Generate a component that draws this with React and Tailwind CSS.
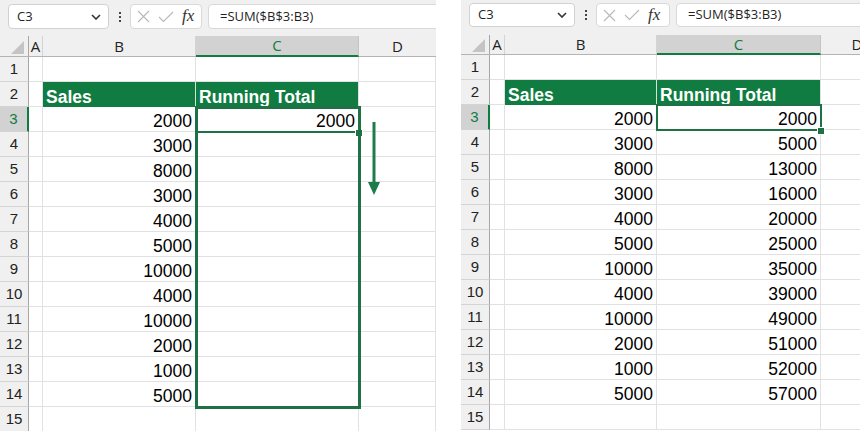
import React from 'react'

const SALES = [2000, 3000, 8000, 3000, 4000, 5000, 10000, 4000, 10000, 2000, 1000, 5000]
const TOTALS = [2000, 5000, 13000, 16000, 20000, 25000, 35000, 39000, 49000, 51000, 52000, 57000]

// per-panel sizes, written out as full class names
const LEFT = {
  w: 'w-[436px]',
  bar: 'h-[36px] pt-[4px]',
  box: 'h-[25px]',
  name: 'w-[101px]',
  fx: 'w-[72px]',
  head: 'h-[21px]',
  cols: ['w-[29px]', 'w-[14px]', 'w-[153px]', 'w-[163px]', 'w-[77px]'],
  active: 'left-[195px] w-[165px]',
  handle: 'left-[356px]',
  range: 'left-[195px] w-[166px]',
  arrow: 'left-[367px]',
}
const RIGHT = {
  w: 'w-[399px]',
  bar: 'h-[35px] pt-[3px]',
  box: 'h-[24px]',
  name: 'w-[106px]',
  fx: 'w-[74px]',
  head: 'h-[20px]',
  cols: ['w-[29px]', 'w-[15px]', 'w-[152px]', 'w-[164px]', 'w-[72px]'],
  active: 'left-[195px] w-[166px]',
  handle: 'left-[357px]',
}

function Toolbar({ cfg }) {
  return (
    <div className={'flex items-start bg-[#f0f0f0] pl-[8px] shrink-0 ' + cfg.bar}>
      <div className={'flex items-center justify-between bg-white border border-[#d1d1d1] rounded-[4px] pl-[8px] pr-[7px] shrink-0 ' + cfg.name + ' ' + cfg.box}>
        <span className="text-[13px] text-[#1f1f1f]">C3</span>
        <svg width="10" height="6" viewBox="0 0 10 6">
          <path d="M1 1 L5 5 L9 1" fill="none" stroke="#333" strokeWidth="1.6" />
        </svg>
      </div>
      <div className={'w-[21px] flex flex-col items-center justify-center gap-[2px] shrink-0 ' + cfg.box}>
        <span className="w-[2px] h-[2px] bg-[#444]" />
        <span className="w-[2px] h-[2px] bg-[#444]" />
        <span className="w-[2px] h-[2px] bg-[#444]" />
      </div>
      <div className={'flex items-center bg-white border border-[#d9d9d9] rounded-[4px] pl-[6px] gap-[8px] shrink-0 ' + cfg.fx + ' ' + cfg.box}>
        <svg width="13" height="13" viewBox="0 0 13 13">
          <path d="M1 1 L12 12 M12 1 L1 12" stroke="#b8b8b8" strokeWidth="1.1" />
        </svg>
        <svg width="16" height="12" viewBox="0 0 16 12">
          <path d="M1 6 L5.5 10.5 L15 1" fill="none" stroke="#b8b8b8" strokeWidth="1.1" />
        </svg>
        <span className="font-['Liberation_Serif',serif] italic text-[17px] leading-none text-[#333] -mt-[2px]">fx</span>
      </div>
      <div className={'flex items-center bg-white border border-[#d9d9d9] rounded-[4px] ml-[6px] pl-[11px] w-[420px] shrink-0 ' + cfg.box}>
        <span className="text-[13px] text-[#1f1f1f]">=SUM($B$3:B3)</span>
      </div>
    </div>
  )
}

function HeaderRow({ cfg }) {
  const [r, a, b, c, d] = cfg.cols
  return (
    <div className={'flex bg-[#f0f0f0] border-b border-[#b4b4b4] text-[15px] text-[#222] shrink-0 ' + cfg.head}>
      <div className={'relative border-r border-[#a6a6a6] shrink-0 ' + r}>
        <svg className="absolute right-[4px] bottom-[2px]" width="13" height="13" viewBox="0 0 13 13">
          <polygon points="13,0 13,13 0,13" fill="#c4c4c4" />
        </svg>
      </div>
      <div className={'flex items-center justify-center border-r border-[#d4d4d4] shrink-0 ' + a}>A</div>
      <div className={'flex items-center justify-center border-r border-[#d4d4d4] shrink-0 ' + b}>B</div>
      <div className={'flex items-center justify-center bg-[#d2d2d2] border-r border-[#c4c4c4] border-b-2 border-b-[#107c41] -mb-px text-[#107c41] shrink-0 ' + c}>
        C
      </div>
      <div className={'flex items-center justify-center shrink-0 ' + d}>D</div>
    </div>
  )
}

function Cell({ w, head, last, children }) {
  const look = head
    ? 'bg-[#107c41] text-white font-bold justify-start ' + (last ? 'border-r border-r-[#e1e1e1]' : 'border-r border-r-[#cfe3d6]')
    : 'border-r border-b border-[#e1e1e1] justify-end text-black'
  return <div className={'flex items-end leading-[20px] px-[3px] shrink-0 ' + look + ' ' + w}>{children}</div>
}

function Row({ cfg, n, b, c, head }) {
  const [r, a, bw, cw, d] = cfg.cols
  const active = n === 3
  return (
    <div className="flex h-[25px] shrink-0">
      <div
        className={
          'flex items-center justify-center border-b border-[#d4d4d4] text-[15px] shrink-0 ' +
          r +
          (active ? ' bg-[#d2d2d2] text-[#107c41] border-r-2 border-r-[#107c41]' : ' bg-[#f0f0f0] text-[#222] border-r border-r-[#a6a6a6]')
        }
      >
        {n}
      </div>
      <div className={'border-r border-b border-[#e1e1e1] shrink-0 ' + a} />
      <Cell w={bw} head={head}>{b}</Cell>
      <Cell w={cw} head={head} last>{c}</Cell>
      <div className={'border-r border-b border-[#e1e1e1] shrink-0 ' + d} />
    </div>
  )
}

function Sheet({ cfg, filled }) {
  return (
    <div className={'flex flex-col overflow-hidden shrink-0 bg-white ' + cfg.w}>
      <Toolbar cfg={cfg} />
      <HeaderRow cfg={cfg} />
      <div className="relative font-['Liberation_Sans',Arial,sans-serif] text-[17.5px]">
        <Row cfg={cfg} n={1} />
        <Row cfg={cfg} n={2} b="Sales" c="Running Total" head />
        {SALES.map((s, i) => (
          <Row key={i} cfg={cfg} n={i + 3} b={s} c={filled || i === 0 ? TOTALS[i] : ''} />
        ))}
        <Row cfg={cfg} n={15} />

        {/* active cell C3 and its fill handle */}
        <div className={'absolute top-[49px] h-[27px] border-2 border-[#1e7145] pointer-events-none ' + cfg.active} />
        <div className={'absolute top-[73px] w-[6px] h-[6px] bg-[#1e7145] outline outline-1 outline-white ' + cfg.handle} />

        {!filled && (
          <>
            <div className={'absolute top-[49px] h-[303px] border-[3px] border-[#1e7145] pointer-events-none ' + cfg.range} />
            <svg className={'absolute top-[65px] ' + cfg.arrow} width="14" height="74" viewBox="0 0 14 74">
              <path d="M7 0 L7 62" stroke="#1e7b4a" strokeWidth="3" />
              <polygon points="1,60 13,60 7,73" fill="#1e7b4a" />
            </svg>
          </>
        )}
      </div>
    </div>
  )
}

export default function App() {
  return (
    <div className="w-[860px] h-[431px] overflow-hidden bg-white flex gap-[25px] font-['Open_Sans',sans-serif]">
      <Sheet cfg={LEFT} />
      <Sheet cfg={RIGHT} filled />
    </div>
  )
}
